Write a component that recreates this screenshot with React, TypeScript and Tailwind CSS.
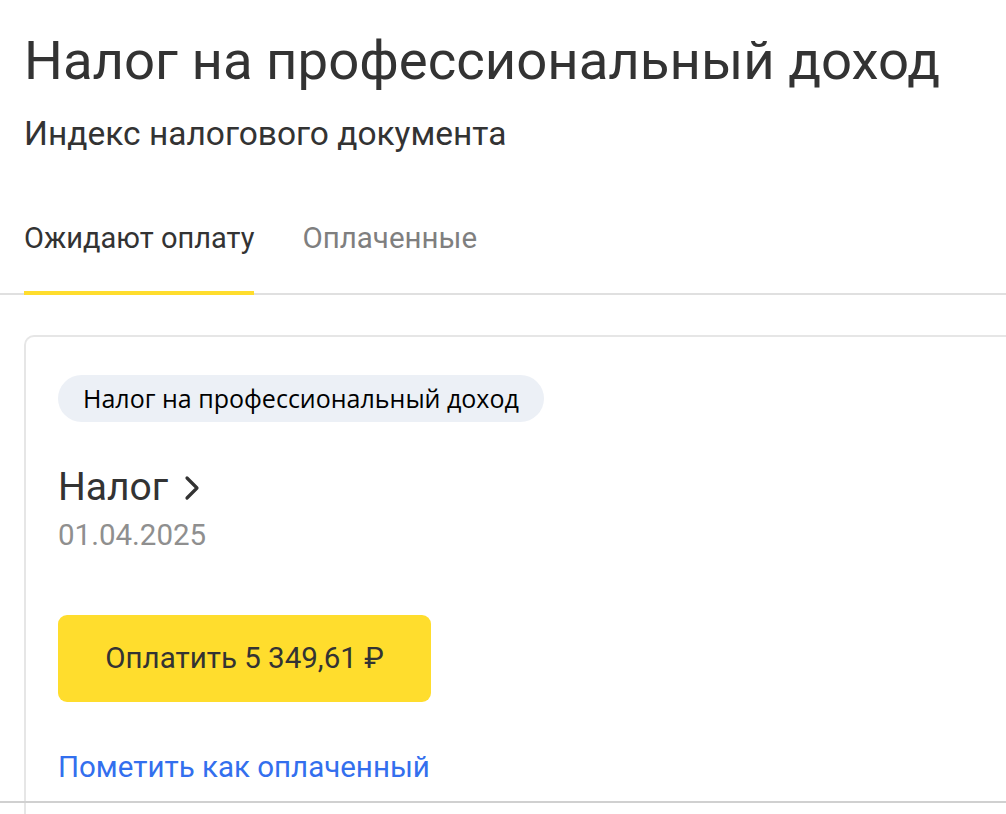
export default function App() {
  return (
    <div className="relative h-[814px] w-[1006px] overflow-hidden bg-white font-['Roboto',sans-serif] text-[#333333]">
      <div className="pl-6">
        <h1 className="pt-[28px] text-[54.5px] font-normal leading-[64px]">Налог на профессиональный доход</h1>
        <p className="mt-[22px] text-[33.5px] leading-[40px]">Индекс налогового документа</p>
      </div>

      <div className="mt-[67px] flex border-b-2 border-[#e0e0e0] pl-6">
        <button className="-mb-[2px] border-b-4 border-[#ffdd2d] pb-[36px] text-[29px] leading-[34px] text-[#333333]">Ожидают оплату</button>
        <button className="ml-12 pb-[38px] text-[29.5px] leading-[34px] text-[#7f7f7f]">Оплаченные</button>
      </div>

      <div className="ml-6 mt-[40px] h-[520px] rounded-tl-[10px] border-l-2 border-t-2 border-[#e6e6e6] pl-[32px] pt-[38px]">
        <span className="inline-flex h-[47px] items-center rounded-full bg-[#ecf0f6] px-[25px] font-['Open_Sans',sans-serif] text-[25px] text-black">
          Налог на профессиональный доход
        </span>

        <div className="mt-[42px] flex items-center gap-[16px]">
          <span className="text-[39px] leading-[46px]">Налог</span>
          <svg width="16" height="26" viewBox="0 0 16 26" fill="none" className="mt-[2px]">
            <path d="M3 3 L13 13 L3 23" stroke="#333333" strokeWidth="3.2" strokeLinecap="round" strokeLinejoin="round" />
          </svg>
        </div>
        <div className="mt-[7px] text-[29.5px] leading-[36px] text-[#8f8f8f]">01.04.2025</div>

        <button className="mt-[62px] flex h-[87px] w-[373px] items-center justify-center rounded-[9px] bg-[#ffdd2d] text-[29.5px] text-[#333333]">
          Оплатить 5 349,61 ₽
        </button>

        <a className="mt-[47px] block text-[29.5px] leading-[36px] text-[#336fee]">Пометить как оплаченный</a>
      </div>

      <div className="absolute left-0 top-[801px] h-[2px] w-full bg-[#d0d0d0]" />
    </div>
  );
}
